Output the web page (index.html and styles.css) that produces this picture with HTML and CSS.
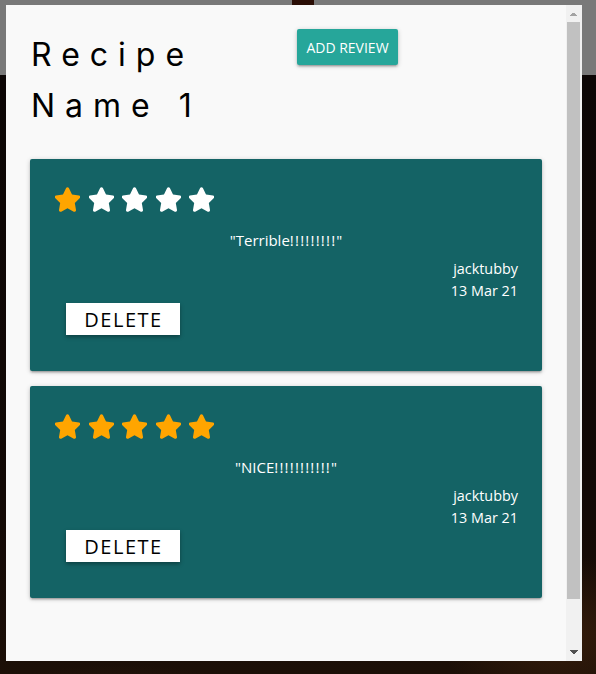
FILE: index.html
```html
<!DOCTYPE html>
<html lang="en">
<head>
<meta charset="utf-8">
<title>Recipe Name 1 - Reviews</title>
<link rel="stylesheet" href="styles.css">
</head>
<body>
<div class="page">
  <header class="nav"><span class="nav-logo"></span></header>
  <div class="hero"></div>
</div>

<div class="modal">
  <div class="modal-body">
    <div class="modal-content">
      <div class="modal-head">
        <h4 class="recipe-title">Recipe Name 1</h4>
        <div class="head-action">
          <button class="btn-add">ADD REVIEW</button>
        </div>
      </div>

      <div class="review-card">
        <div class="stars">
          <svg class="star on" viewBox="28 0 520 512"><path d="M259.3 17.8L194 150.2 47.9 171.5c-26.2 3.8-36.7 36.1-17.7 54.6l105.7 103-25 145.5c-4.5 26.3 23.2 46 46.4 33.7L288 439.6l130.7 68.7c23.2 12.2 50.9-7.4 46.4-33.7l-25-145.5 105.7-103c19-18.5 8.5-50.8-17.7-54.6L382 150.2 316.7 17.8c-11.7-23.6-45.6-23.9-57.4 0z"/></svg>
          <svg class="star" viewBox="28 0 520 512"><path d="M259.3 17.8L194 150.2 47.9 171.5c-26.2 3.8-36.7 36.1-17.7 54.6l105.7 103-25 145.5c-4.5 26.3 23.2 46 46.4 33.7L288 439.6l130.7 68.7c23.2 12.2 50.9-7.4 46.4-33.7l-25-145.5 105.7-103c19-18.5 8.5-50.8-17.7-54.6L382 150.2 316.7 17.8c-11.7-23.6-45.6-23.9-57.4 0z"/></svg>
          <svg class="star" viewBox="28 0 520 512"><path d="M259.3 17.8L194 150.2 47.9 171.5c-26.2 3.8-36.7 36.1-17.7 54.6l105.7 103-25 145.5c-4.5 26.3 23.2 46 46.4 33.7L288 439.6l130.7 68.7c23.2 12.2 50.9-7.4 46.4-33.7l-25-145.5 105.7-103c19-18.5 8.5-50.8-17.7-54.6L382 150.2 316.7 17.8c-11.7-23.6-45.6-23.9-57.4 0z"/></svg>
          <svg class="star" viewBox="28 0 520 512"><path d="M259.3 17.8L194 150.2 47.9 171.5c-26.2 3.8-36.7 36.1-17.7 54.6l105.7 103-25 145.5c-4.5 26.3 23.2 46 46.4 33.7L288 439.6l130.7 68.7c23.2 12.2 50.9-7.4 46.4-33.7l-25-145.5 105.7-103c19-18.5 8.5-50.8-17.7-54.6L382 150.2 316.7 17.8c-11.7-23.6-45.6-23.9-57.4 0z"/></svg>
          <svg class="star" viewBox="28 0 520 512"><path d="M259.3 17.8L194 150.2 47.9 171.5c-26.2 3.8-36.7 36.1-17.7 54.6l105.7 103-25 145.5c-4.5 26.3 23.2 46 46.4 33.7L288 439.6l130.7 68.7c23.2 12.2 50.9-7.4 46.4-33.7l-25-145.5 105.7-103c19-18.5 8.5-50.8-17.7-54.6L382 150.2 316.7 17.8c-11.7-23.6-45.6-23.9-57.4 0z"/></svg>
        </div>
        <p class="review-text">"Terrible<span class="bang">!!!!!!!!!</span>"</p>
        <div class="review-meta">
          <div>jacktubby</div>
          <div>13 Mar 21</div>
        </div>
        <button class="btn-delete">DELETE</button>
      </div>

      <div class="review-card">
        <div class="stars">
          <svg class="star on" viewBox="28 0 520 512"><path d="M259.3 17.8L194 150.2 47.9 171.5c-26.2 3.8-36.7 36.1-17.7 54.6l105.7 103-25 145.5c-4.5 26.3 23.2 46 46.4 33.7L288 439.6l130.7 68.7c23.2 12.2 50.9-7.4 46.4-33.7l-25-145.5 105.7-103c19-18.5 8.5-50.8-17.7-54.6L382 150.2 316.7 17.8c-11.7-23.6-45.6-23.9-57.4 0z"/></svg>
          <svg class="star on" viewBox="28 0 520 512"><path d="M259.3 17.8L194 150.2 47.9 171.5c-26.2 3.8-36.7 36.1-17.7 54.6l105.7 103-25 145.5c-4.5 26.3 23.2 46 46.4 33.7L288 439.6l130.7 68.7c23.2 12.2 50.9-7.4 46.4-33.7l-25-145.5 105.7-103c19-18.5 8.5-50.8-17.7-54.6L382 150.2 316.7 17.8c-11.7-23.6-45.6-23.9-57.4 0z"/></svg>
          <svg class="star on" viewBox="28 0 520 512"><path d="M259.3 17.8L194 150.2 47.9 171.5c-26.2 3.8-36.7 36.1-17.7 54.6l105.7 103-25 145.5c-4.5 26.3 23.2 46 46.4 33.7L288 439.6l130.7 68.7c23.2 12.2 50.9-7.4 46.4-33.7l-25-145.5 105.7-103c19-18.5 8.5-50.8-17.7-54.6L382 150.2 316.7 17.8c-11.7-23.6-45.6-23.9-57.4 0z"/></svg>
          <svg class="star on" viewBox="28 0 520 512"><path d="M259.3 17.8L194 150.2 47.9 171.5c-26.2 3.8-36.7 36.1-17.7 54.6l105.7 103-25 145.5c-4.5 26.3 23.2 46 46.4 33.7L288 439.6l130.7 68.7c23.2 12.2 50.9-7.4 46.4-33.7l-25-145.5 105.7-103c19-18.5 8.5-50.8-17.7-54.6L382 150.2 316.7 17.8c-11.7-23.6-45.6-23.9-57.4 0z"/></svg>
          <svg class="star on" viewBox="28 0 520 512"><path d="M259.3 17.8L194 150.2 47.9 171.5c-26.2 3.8-36.7 36.1-17.7 54.6l105.7 103-25 145.5c-4.5 26.3 23.2 46 46.4 33.7L288 439.6l130.7 68.7c23.2 12.2 50.9-7.4 46.4-33.7l-25-145.5 105.7-103c19-18.5 8.5-50.8-17.7-54.6L382 150.2 316.7 17.8c-11.7-23.6-45.6-23.9-57.4 0z"/></svg>
        </div>
        <p class="review-text">"NICE<span class="bang">!!!!!!!!!!!</span>"</p>
        <div class="review-meta">
          <div>jacktubby</div>
          <div>13 Mar 21</div>
        </div>
        <button class="btn-delete">DELETE</button>
      </div>
    </div>
  </div>
  <div class="scrollbar" aria-hidden="true">
    <span class="sb-btn sb-up"></span>
    <div class="sb-track"><span class="sb-thumb"></span></div>
    <span class="sb-btn sb-down"></span>
  </div>
</div>
</body>
</html>
```

FILE: styles.css
```css
html, body {
  margin: 0;
  padding: 0;
  height: 100%;
}

body {
  font-family: "Open Sans", "Noto Sans", "Liberation Sans", sans-serif;
  background: #0b0806;
  overflow: hidden;
}

.page {
  display: flex;
  flex-direction: column;
  height: 100%;
}

.nav {
  height: 75px;
  background: #797979;
  display: flex;
  justify-content: center;
}

.nav-logo {
  display: block;
  width: 22px;
  height: 5px;
  margin-left: 10px;
  background: #2a0d05;
}

.hero {
  flex: 1;
  background:
    radial-gradient(ellipse 180px 60px at 120px 650px, rgba(60, 40, 25, 0.7), transparent),
    radial-gradient(ellipse 220px 70px at 320px 670px, rgba(70, 28, 6, 0.85), transparent),
    radial-gradient(ellipse 120px 80px at 560px 560px, rgba(60, 32, 12, 0.8), transparent),
    linear-gradient(#0c0605, #120906 70%, #1c0f07);
}

.modal {
  position: fixed;
  top: 5px;
  left: 6px;
  width: 576px;
  height: 656px;
  background: #f9f9f9;
  display: flex;
}

.modal-body {
  flex: 1;
  min-width: 0;
  overflow: hidden;
}

.scrollbar {
  width: 16px;
  flex: none;
  background: #f1f1f1;
  display: flex;
  flex-direction: column;
}

.sb-btn {
  display: block;
  height: 16px;
  flex: none;
  background-repeat: no-repeat;
  background-size: 8px 4px;
}

.sb-up {
  background-image: conic-gradient(from 135deg at 50% 0, #a3a3a3 0 90deg, transparent 90deg);
  background-position: 4px 7px;
}

.sb-down {
  background-image: conic-gradient(from -45deg at 50% 100%, #505050 0 90deg, transparent 90deg);
  background-position: 4px 5px;
}

.sb-track {
  flex: 1;
  padding-top: 1px;
}

.sb-thumb {
  display: block;
  height: 577px;
  margin: 0 2px 0 1px;
  background: #c1c1c1;
}

.modal-content {
  padding: 24px;
}

.modal-head {
  display: grid;
  grid-template-columns: 1fr 1fr;
  margin-bottom: 28px;
}

.recipe-title {
  margin: 0;
  padding-left: 1px;
  font-family: "Inter", "Liberation Sans", sans-serif;
  font-weight: 400;
  font-size: 32px;
  line-height: 51px;
  letter-spacing: 10px;
  color: #000;
}

.head-action {
  padding-left: 11px;
}

.btn-add {
  height: 36px;
  width: 101px;
  padding: 0;
  border: 0;
  border-radius: 2px;
  background: #26a69a;
  color: #fff;
  font-family: "Open Sans", "Noto Sans", sans-serif;
  font-size: 14px;
  box-shadow: 0 2px 2px 0 rgba(0,0,0,.14), 0 3px 1px -2px rgba(0,0,0,.12), 0 1px 5px 0 rgba(0,0,0,.2);
}

.review-card {
  background: #146365;
  border-radius: 2px;
  padding: 24px 24px 36px;
  margin-bottom: 15px;
  color: #fff;
  box-shadow: 0 2px 2px 0 rgba(0,0,0,.14), 0 3px 1px -2px rgba(0,0,0,.12), 0 1px 5px 0 rgba(0,0,0,.2);
}

.stars {
  display: flex;
  gap: 8.5px;
  margin: 4px 0 0 1px;
  height: 25px;
}

.star {
  width: 25px;
  height: 25px;
  fill: #ffffff;
}

.star.on {
  fill: #ffa500;
}

.review-text {
  margin: 17px 0 0;
  text-align: center;
  font-size: 15px;
  line-height: 22px;
}

.bang {
  letter-spacing: 1.2px;
}

.review-meta {
  margin-top: 7px;
  text-align: right;
  font-size: 14.4px;
  line-height: 22px;
}

.btn-delete {
  display: block;
  margin: 1px 0 0 12px;
  width: 114px;
  height: 32px;
  padding: 0 0 0 1px;
  border: 0;
  background: #fff;
  color: #000;
  font-family: "Open Sans", "Noto Sans", sans-serif;
  font-size: 20px;
  letter-spacing: 1.5px;
  box-shadow: 0 2px 4px rgba(0,0,0,.35);
}
```
